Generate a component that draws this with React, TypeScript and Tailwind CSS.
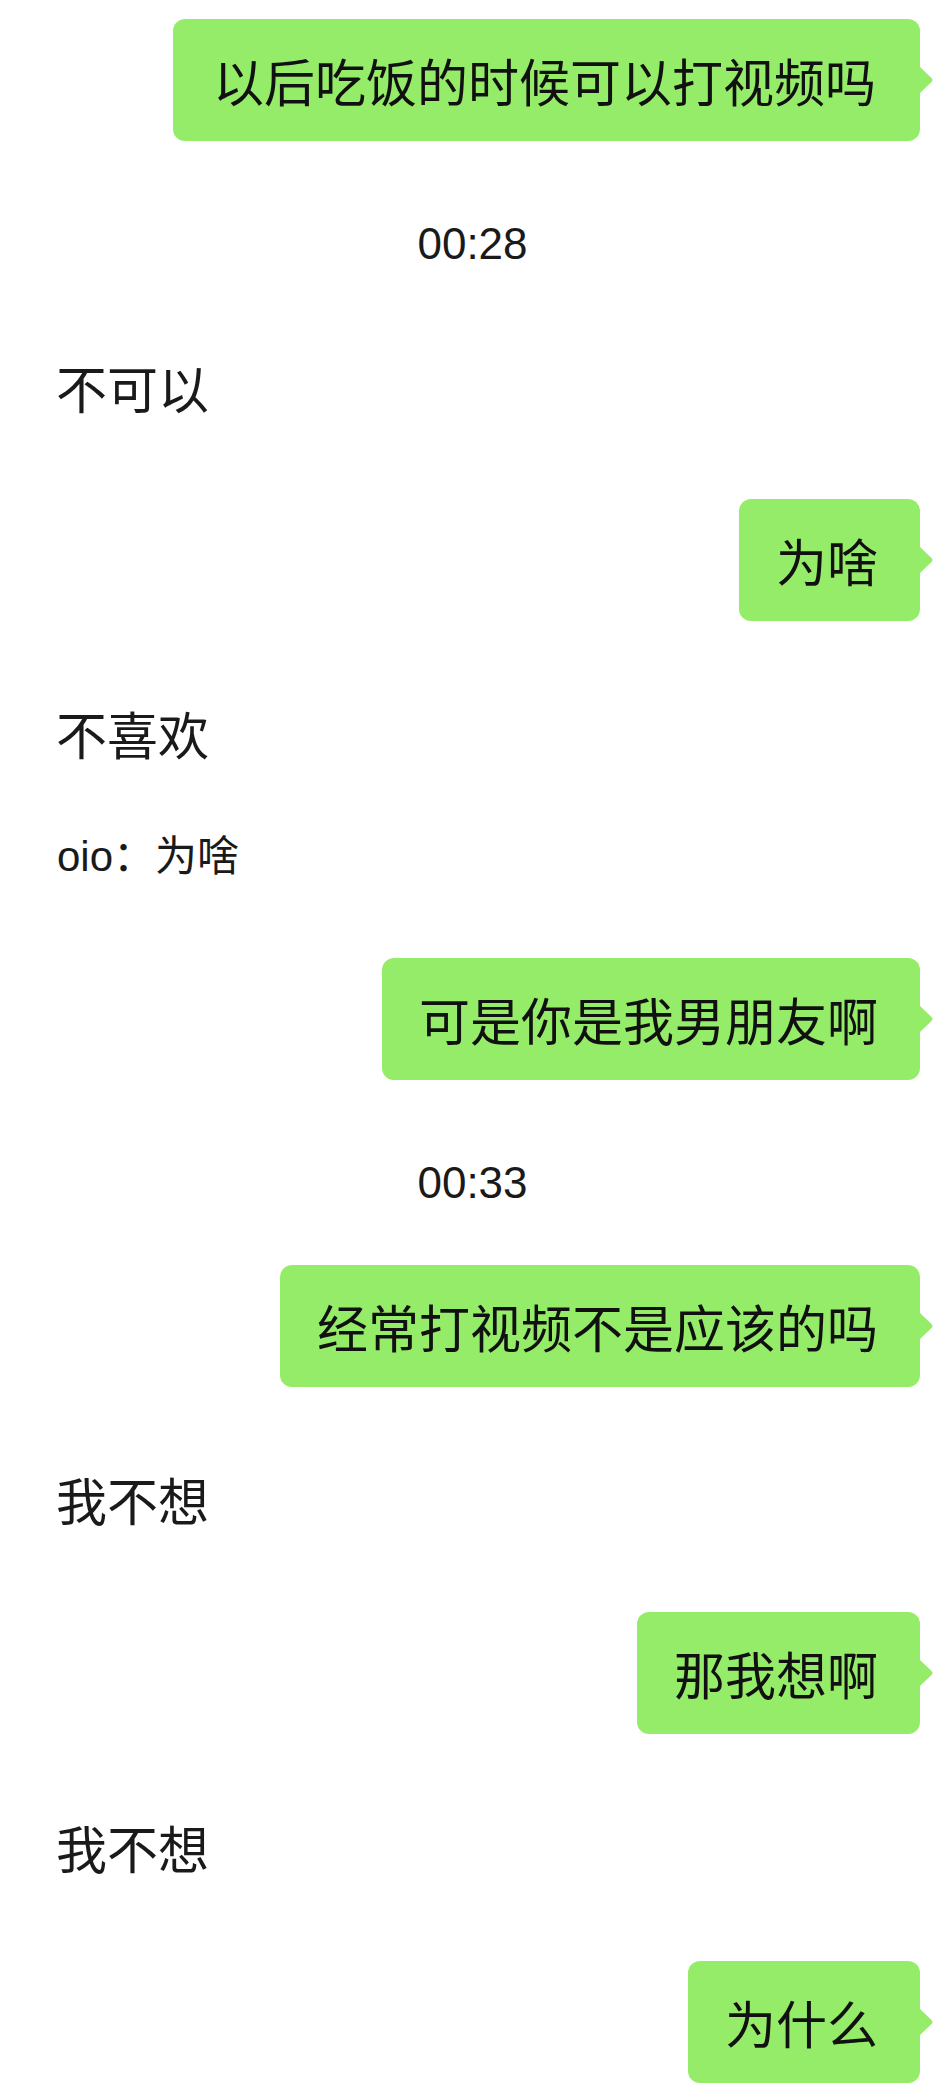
import React from "react";

type Msg =
  | { kind: "me"; text: string; mt: string; big?: boolean }
  | { kind: "other"; text: string; mt: string }
  | { kind: "time"; text: string; mt: string }
  | { kind: "quote"; name: string; text: string; mt: string };

const messages: Msg[] = [
  { kind: "me", text: "以后吃饭的时候可以打视频吗", mt: "mt-[19px]", big: true },
  { kind: "time", text: "00:28", mt: "mt-[73px]" },
  { kind: "other", text: "不可以", mt: "mt-[83px]" },
  { kind: "me", text: "为啥", mt: "mt-[82px]" },
  { kind: "other", text: "不喜欢", mt: "mt-[82px]" },
  { kind: "quote", name: "oio", text: "为啥", mt: "mt-[64px]" },
  { kind: "me", text: "可是你是我男朋友啊", mt: "mt-[71px]" },
  { kind: "time", text: "00:33", mt: "mt-[73px]" },
  { kind: "me", text: "经常打视频不是应该的吗", mt: "mt-[52px]" },
  { kind: "other", text: "我不想", mt: "mt-[82px]" },
  { kind: "me", text: "那我想啊", mt: "mt-[83px]" },
  { kind: "other", text: "我不想", mt: "mt-[83px]" },
  { kind: "me", text: "为什么", mt: "mt-[84px]" },
];

const cjk = "font-['Noto_Sans_CJK_SC',sans-serif]";

function MyBubble({ text, big }: { text: string; big?: boolean }) {
  return (
    <div className="flex justify-end pr-[25px]">
      <div
        className={`relative flex h-[122px] items-center rounded-[12px] bg-[#95ec69] text-[51px] text-[#111111] ${cjk} ${
          big ? "pl-[40px] pr-[44px]" : "pl-[37px] pr-[42px]"
        }`}
      >
        <span className="whitespace-nowrap leading-none">{text}</span>
        {/* 气泡小尖角 */}
        <svg
          className="absolute left-full top-1/2 -mt-[13px]"
          width="14"
          height="26"
          viewBox="0 0 14 26"
        >
          <path d="M0 0 L11.5 11 Q13.5 13 11.5 15 L0 26 Z" fill="#95ec69" />
        </svg>
      </div>
    </div>
  );
}

export default function App() {
  return (
    <div className="flex min-h-[2092px] w-[945px] flex-col bg-white pb-[9px]">
      {messages.map((m, i) => {
        if (m.kind === "me") {
          return (
            <div key={i} className={m.mt}>
              <MyBubble text={m.text} big={m.big} />
            </div>
          );
        }
        if (m.kind === "time") {
          return (
            <div
              key={i}
              className={`${m.mt} h-[60px] text-center font-['Liberation_Sans',sans-serif] text-[44px] leading-[60px] text-[#1a1a1a]`}
            >
              {m.text}
            </div>
          );
        }
        if (m.kind === "quote") {
          return (
            <div
              key={i}
              className={`${m.mt} h-[60px] pl-[57px] text-[42px] leading-[60px] text-[#1a1a1a] font-['Liberation_Sans','Noto_Sans_CJK_SC',sans-serif]`}
            >
              {m.name}：{m.text}
            </div>
          );
        }
        return (
          <div
            key={i}
            className={`${m.mt} h-[60px] pl-[56px] text-[51px] leading-[60px] text-[#1a1a1a] ${cjk}`}
          >
            {m.text}
          </div>
        );
      })}
    </div>
  );
}
